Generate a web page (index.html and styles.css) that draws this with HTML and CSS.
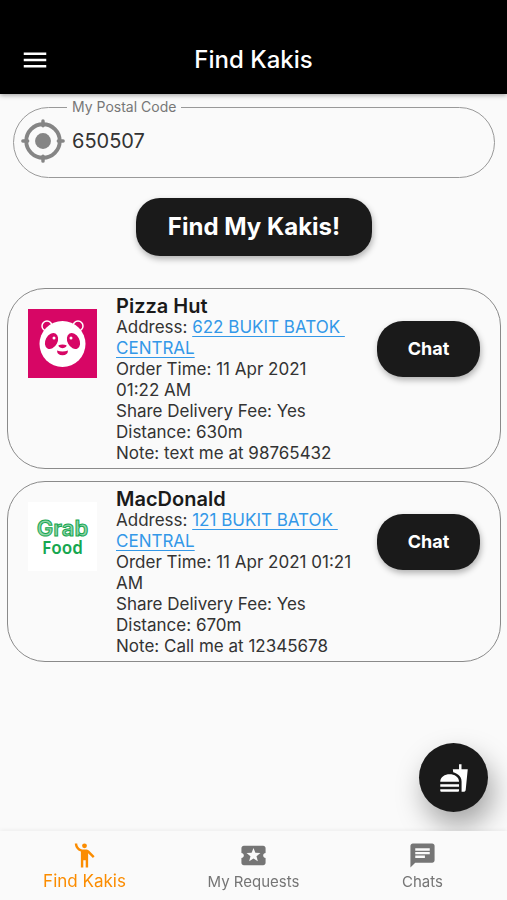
FILE: index.html
```html
<!DOCTYPE html>
<html lang="en">
<head>
<meta charset="utf-8">
<meta name="viewport" content="width=device-width, initial-scale=1">
<title>Find Kakis</title>
<link rel="stylesheet" href="styles.css">
</head>
<body>
<header class="app-bar">
  <button class="menu-button" type="button" aria-label="Menu">
    <svg viewBox="0 0 24 24"><path d="M3 18h18v-2H3v2zm0-5h18v-2H3v2zm0-7v2h18V6H3z"/></svg>
  </button>
  <h1 class="app-title">Find Kakis</h1>
</header>

<main class="content">
  <form class="search">
    <fieldset class="field">
      <legend class="field-legend"><label for="postal">My Postal Code</label></legend>
      <div class="field-row">
        <svg class="locate-icon" viewBox="0 0 48 48" aria-hidden="true">
          <circle cx="24" cy="24" r="17.5" fill="none" stroke="currentColor" stroke-width="4"/>
          <circle cx="24" cy="24" r="8.3" fill="currentColor"/>
          <path d="M24 3v5M24 40v5M3 24h5M40 24h5" stroke="currentColor" stroke-width="3.6" stroke-linecap="round"/>
        </svg>
        <input class="field-input" id="postal" type="text" inputmode="numeric" value="650507">
      </div>
    </fieldset>
    <button class="pill find-button" type="button">Find My Kakis!</button>
  </form>

  <article class="card">
    <svg class="logo" viewBox="0 0 69 69" role="img" aria-label="Panda logo">
      <rect width="69" height="69" fill="#d70665"/>
      <g fill="#d70665" stroke="#fff" stroke-width="1.5"><circle cx="19" cy="17" r="5"/><circle cx="50" cy="17" r="5"/></g>
      <ellipse cx="34.5" cy="35" rx="23" ry="23" fill="#fff"/>
      <g fill="#d70665">
        <ellipse cx="23.5" cy="32" rx="6" ry="8.5" transform="rotate(28 23.5 32)"/>
        <ellipse cx="45.5" cy="32" rx="6" ry="8.5" transform="rotate(-28 45.5 32)"/>
        <path d="M30.500 36.300q4-1.800 8 0q.4 1.900-4 3q-4.400-1.100-4-3z"/>
        <path d="M29 41.500q5.500 2 11 0q-.2 4.800-5.500 4.800q-5.300 0-5.500-4.800z"/>
      </g>
      <circle cx="26" cy="29" r="1.500" fill="#fff"/><circle cx="43" cy="29" r="1.500" fill="#fff"/>
    </svg>
    <div class="details">
      <h2 class="shop">Pizza Hut</h2>
      <p>Address: <a href="#pizza-hut">622 BUKIT BATOK&nbsp; CENTRAL</a></p>
      <p>Order Time: 11 Apr 2021 01:22&nbsp;AM</p>
      <p>Share Delivery Fee: Yes</p>
      <p>Distance: 630m</p>
      <p>Note: text me at 98765432</p>
    </div>
    <button class="pill chat-button" type="button">Chat</button>
  </article>

  <article class="card">
    <svg class="logo" viewBox="0 0 69 69" role="img" aria-label="Grab Food logo">
      <rect width="69" height="69" fill="#fff"/>
      <text class="logo-grab" x="34.500" y="34" text-anchor="middle">Grab</text>
      <text class="logo-food" x="34.500" y="52" text-anchor="middle">Food</text>
    </svg>
    <div class="details">
      <h2 class="shop">MacDonald</h2>
      <p>Address: <a href="#macdonald">121 BUKIT BATOK&nbsp; CENTRAL</a></p>
      <p>Order Time: 11 Apr 2021 01:21 AM</p>
      <p>Share Delivery Fee: Yes</p>
      <p>Distance: 670m</p>
      <p>Note: Call me at 12345678</p>
    </div>
    <button class="pill chat-button" type="button">Chat</button>
  </article>
</main>

<button class="fab" type="button" aria-label="New food order">
  <svg viewBox="0 0 24 24"><path d="M18.060 22.990h1.660c.84 0 1.530-.64 1.630-1.460L23 5.050h-5V1h-1.970v4.050h-4.970l.3 2.340c1.710.47 3.310 1.320 4.270 2.260 1.440 1.420 2.430 2.890 2.430 5.290v8.050zM1 21.990V21h15.030v.99c0 .55-.45 1-1.010 1H2.010c-.56 0-1.010-.45-1.010-1zm15.030-7c0-8-15.030-8-15.030 0h15.030zM1.020 17h15v2h-15z"/></svg>
</button>

<nav class="tabs">
  <a class="tab tab-active" href="#find">
    <svg viewBox="0 0 24 24"><circle cx="12" cy="4" r="2"/><path d="M15.890 8.110C15.500 7.720 14.830 7 13.530 7h-2.540C8.240 6.990 6 4.750 6 2H4c0 3.160 2.110 5.840 5 6.710V22h2v-6h2v6h2V10.050L18.950 14l1.410-1.410-4.470-4.480z"/></svg>
    <span>Find Kakis</span>
  </a>
  <a class="tab" href="#requests">
    <svg viewBox="0 0 24 24"><path d="M20 12c0-1.100.9-2 2-2V6c0-1.100-.9-2-2-2H4c-1.100 0-1.990.9-1.990 2v4c1.100 0 1.990.9 1.990 2s-.89 2-2 2v4c0 1.100.9 2 2 2h16c1.100 0 2-.9 2-2v-4c-1.100 0-2-.9-2-2zm-4.420 4.800L12 14.500l-3.580 2.300 1.080-4.120-3.290-2.690 4.240-.25L12 5.800l1.540 3.950 4.240.25-3.290 2.690 1.090 4.110z"/></svg>
    <span>My Requests</span>
  </a>
  <a class="tab" href="#chats">
    <svg viewBox="0 0 24 24"><path d="M20 2H4c-1.100 0-1.990.9-1.990 2L2 22l4-4h14c1.100 0 2-.9 2-2V4c0-1.100-.9-2-2-2zm-6 12H6v-2h8v2zm4-3H6V9h12v2zm0-3H6V6h12v2z"/></svg>
    <span>Chats</span>
  </a>
</nav>
</body>
</html>
```
FILE: styles.css
```css
* { box-sizing: border-box; }

body {
  margin: 0;
  min-height: 100vh;
  display: flex;
  flex-direction: column;
  background: #fafafa;
  color: #333;
  font-family: Inter, "Liberation Sans", sans-serif;
  font-size: 17px;
  line-height: 21px;
}

h1, h2, p { margin: 0; }
button { border: 0; padding: 0; font-family: inherit; cursor: pointer; }
svg { display: block; fill: currentColor; }

.app-bar {
  display: grid;
  grid-template-columns: 70px 1fr 70px;
  align-items: center;
  padding-top: 26px;
  height: 94px;
  background: #000;
  color: #fff;
  box-shadow: 0 1px 5px rgba(0, 0, 0, 0.4);
}
.menu-button { background: none; color: #fff; justify-self: center; }
.menu-button svg { width: 30px; height: 30px; }
.app-title { text-align: center; font-size: 24px; line-height: 32px; font-weight: 500; }

.content { flex: 1; padding: 5px 6px 12px 7px; }

.search { display: flex; flex-direction: column; align-items: center; margin-bottom: 32px; }
.field {
  align-self: stretch;
  min-width: 0;
  margin: 0 6px 20px;
  padding: 3px 6px 13px;
  border: 1px solid #999;
  border-radius: 36px;
}
.field-legend { margin-left: 47px; padding: 0 5px; font-size: 14px; line-height: 16px; color: #777; }
.field-row { display: flex; align-items: center; }
.locate-icon { width: 46px; height: 46px; color: #858585; }
.field-input {
  flex: 1;
  min-width: 0;
  padding: 0 6px;
  border: 0;
  outline: 0;
  background: none;
  color: #333;
  font-family: inherit;
  font-size: 20px;
  line-height: 24px;
}

.pill {
  background: #1a1a1a;
  color: #fff;
  font-weight: 700;
  box-shadow: 1px 3px 6px rgba(0, 0, 0, 0.3);
}
.find-button { padding: 14px 32px; border-radius: 24px; font-size: 24px; line-height: 30px; }

.card {
  display: grid;
  grid-template-columns: 69px 1fr 103px;
  align-items: start;
  padding: 6px 20px 4px;
  margin-bottom: 12px;
  border: 1px solid #8a8a8a;
  border-radius: 38px;
}
.logo { width: 69px; height: 69px; margin-top: 14px; }
.logo-grab { font: 600 22px Inter, sans-serif; fill: #8fd3a8; stroke: #16a750; stroke-width: 1px; }
.logo-food { font: 600 17px "Noto Sans", sans-serif; fill: #16a750; }
.details { padding: 0 18px 0 19px; }
.shop { font-size: 20px; line-height: 22px; font-weight: 600; color: #1a1a1a; }
.details a { color: #3398e8; text-underline-offset: 3px; text-decoration-thickness: 1px; }
.chat-button { margin-top: 26px; padding: 16px 0; border-radius: 26px; font-size: 18px; line-height: 24px; }

.fab {
  position: fixed;
  right: 19px;
  bottom: 88px;
  width: 69px;
  height: 69px;
  display: grid;
  place-items: center;
  border-radius: 50%;
  background: #1a1a1a;
  color: #fff;
  box-shadow: 5px 14px 28px rgba(0, 0, 0, 0.35);
}
.fab svg { width: 30px; height: 30px; }

.tabs {
  position: sticky;
  bottom: 0;
  z-index: 1;
  display: grid;
  grid-template-columns: repeat(3, 1fr);
  height: 69px;
  padding-top: 10px;
  background: #fafafa;
  box-shadow: 0 -1px 4px rgba(0, 0, 0, 0.06);
}
.tab {
  display: flex;
  flex-direction: column;
  align-items: center;
  gap: 2px;
  color: #757575;
  font-size: 15px;
  line-height: 20px;
  text-decoration: none;
}
.tab svg { width: 29px; height: 29px; }
.tab-active { color: #fb8c00; font-size: 17px; line-height: 18px; }
```
